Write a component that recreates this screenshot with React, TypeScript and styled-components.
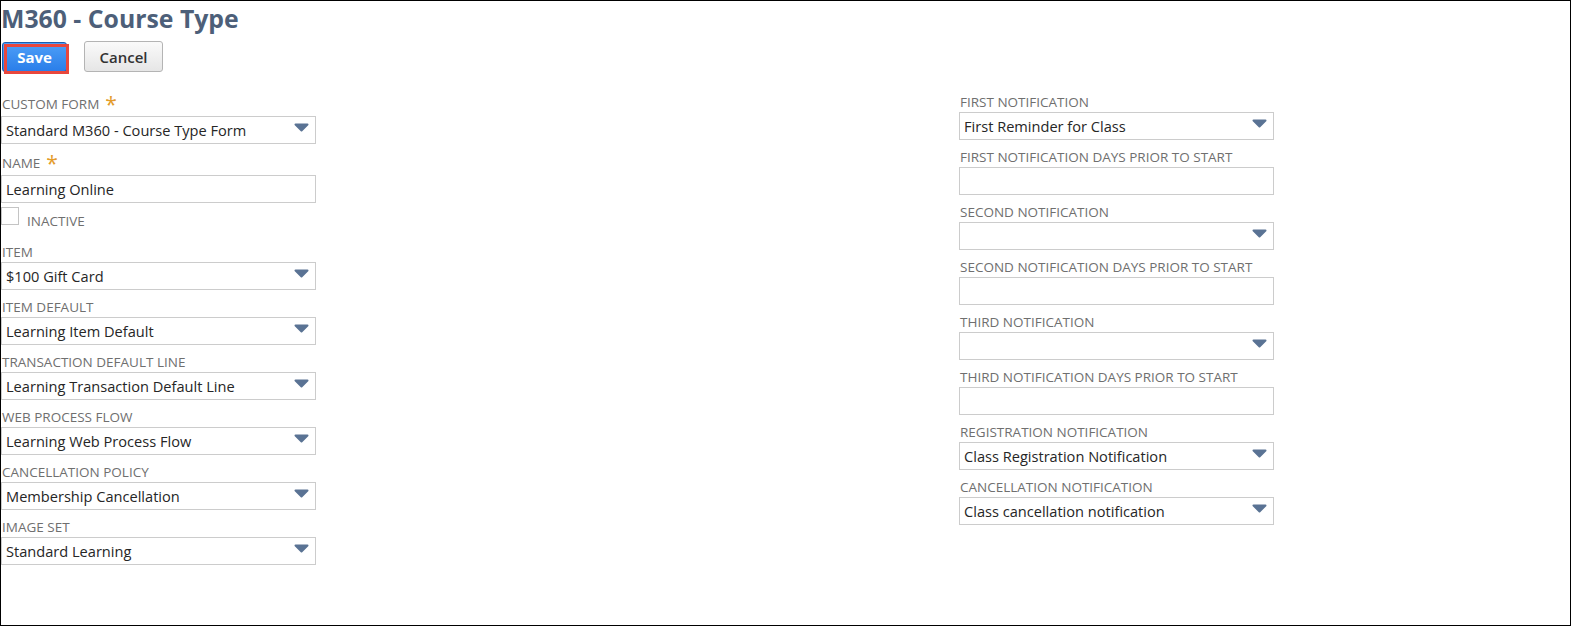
import styled, { createGlobalStyle } from "styled-components";

const GlobalStyle = createGlobalStyle`
  body {
    margin: 0;
    background: #fff;
    font-family: "Open Sans", "Liberation Sans", sans-serif;
  }
`;

const Page = styled.div`
  box-sizing: border-box;
  width: 1571px;
  height: 626px;
  border: 1px solid #000;
  padding-top: 2px;
`;

const Title = styled.h1`
  margin: 0;
  font-size: 24.8px;
  line-height: 30px;
  font-weight: 700;
  color: #4d5f79;
`;

const Toolbar = styled.div`
  display: flex;
  align-items: center;
  gap: 17px;
  margin-top: 8px;
  padding-left: 1px;
  height: 31px;
`;

const SaveWrap = styled.div`
  position: relative;
`;

const SaveButton = styled.button`
  box-sizing: border-box;
  width: 65px;
  height: 30px;
  border: 1px solid #1b5db0;
  border-radius: 3px;
  background: linear-gradient(#4e9ff8, #2a7ee9);
  color: #fff;
  font-family: inherit;
  font-size: 15px;
  font-weight: 700;
  padding: 0;
`;

const Highlight = styled.span`
  position: absolute;
  left: 2px;
  top: 2px;
  width: 65px;
  height: 30px;
  box-sizing: border-box;
  border: 3px solid #e8473d;
  pointer-events: none;
`;

const CancelButton = styled.button`
  box-sizing: border-box;
  width: 79px;
  height: 31px;
  border: 1px solid #b4b4b4;
  border-radius: 3px;
  background: linear-gradient(#fafafa, #e6e6e6);
  color: #333;
  font-family: inherit;
  font-size: 15px;
  font-weight: 600;
  padding: 0;
`;

const Form = styled.div`
  display: grid;
  grid-template-columns: 958px 315px;
  margin-top: 22px;
`;

const Column = styled.div`
  display: flex;
  flex-direction: column;
`;

const Field = styled.div`
  display: flex;
  flex-direction: column;
  gap: 2px;
  width: 315px;
  margin-bottom: 9px;
`;

const Label = styled.label<{ $required?: boolean }>`
  display: flex;
  align-items: center;
  gap: 6px;
  height: ${(p) => (p.$required ? "20px" : "16px")};
  font-size: 13.5px;
  line-height: 16px;
  color: #6f6f6f;
  text-transform: uppercase;
  padding-left: 1px;
  white-space: nowrap;
`;

const Req = styled.span`
  color: #e39b2b;
  font-size: 21px;
  line-height: 20px;
  height: 20px;
`;

const Box = styled.div`
  box-sizing: border-box;
  height: 28px;
  border: 1px solid #cccccc;
  display: flex;
  align-items: center;
  justify-content: space-between;
  padding: 0 6px 0 4px;
  font-size: 14.6px;
  color: #262626;
  white-space: nowrap;
`;

const Arrow = styled.svg`
  align-self: flex-start;
  margin-top: 6px;
  flex: none;
`;

const CheckRow = styled.div`
  display: flex;
  gap: 8px;
  height: 28px;
  margin: -5px 0 9px;
`;

const CheckBox = styled.span`
  box-sizing: border-box;
  width: 18px;
  height: 18px;
  border: 1px solid #c4c4c4;
  background: #fff;
`;

const CheckLabel = styled.span`
  padding-top: 6px;
  font-size: 13.5px;
  line-height: 16px;
  color: #6f6f6f;
`;

const DownArrow = () => (
  <Arrow width="15" height="9" viewBox="0 0 15 9">
    <path
      d="M1.5 1.5 H13.5 L7.5 7.5 Z"
      fill="#5a7394"
      stroke="#5a7394"
      strokeWidth="2"
      strokeLinejoin="round"
    />
  </Arrow>
);

type FieldDef = {
  label: string;
  value?: string;
  select?: boolean;
  required?: boolean;
};

const FormField = ({ label, value, select, required }: FieldDef) => (
  <Field>
    <Label $required={required}>
      {label}
      {required && <Req>*</Req>}
    </Label>
    <Box>
      <span>{value}</span>
      {select && <DownArrow />}
    </Box>
  </Field>
);

const leftTop: FieldDef[] = [
  { label: "Custom Form", value: "Standard M360 - Course Type Form", select: true, required: true },
  { label: "Name", value: "Learning Online", required: true },
];

const leftBottom: FieldDef[] = [
  { label: "Item", value: "$100 Gift Card", select: true },
  { label: "Item Default", value: "Learning Item Default", select: true },
  { label: "Transaction Default Line", value: "Learning Transaction Default Line", select: true },
  { label: "Web Process Flow", value: "Learning Web Process Flow", select: true },
  { label: "Cancellation Policy", value: "Membership Cancellation", select: true },
  { label: "Image Set", value: "Standard Learning", select: true },
];

const right: FieldDef[] = [
  { label: "First Notification", value: "First Reminder for Class", select: true },
  { label: "First Notification Days Prior to Start" },
  { label: "Second Notification", select: true },
  { label: "Second Notification Days Prior to Start" },
  { label: "Third Notification", select: true },
  { label: "Third Notification Days Prior to Start" },
  { label: "Registration Notification", value: "Class Registration Notification", select: true },
  { label: "Cancellation Notification", value: "Class cancellation notification", select: true },
];

export default function App() {
  return (
    <>
      <GlobalStyle />
      <Page>
        <Title>M360 - Course Type</Title>
        <Toolbar>
          <SaveWrap>
            <SaveButton>Save</SaveButton>
            <Highlight />
          </SaveWrap>
          <CancelButton>Cancel</CancelButton>
        </Toolbar>
        <Form>
          <Column>
            {leftTop.map((f) => (
              <FormField key={f.label} {...f} />
            ))}
            <CheckRow>
              <CheckBox />
              <CheckLabel>INACTIVE</CheckLabel>
            </CheckRow>
            {leftBottom.map((f) => (
              <FormField key={f.label} {...f} />
            ))}
          </Column>
          <Column>
            {right.map((f) => (
              <FormField key={f.label} {...f} />
            ))}
          </Column>
        </Form>
      </Page>
    </>
  );
}
